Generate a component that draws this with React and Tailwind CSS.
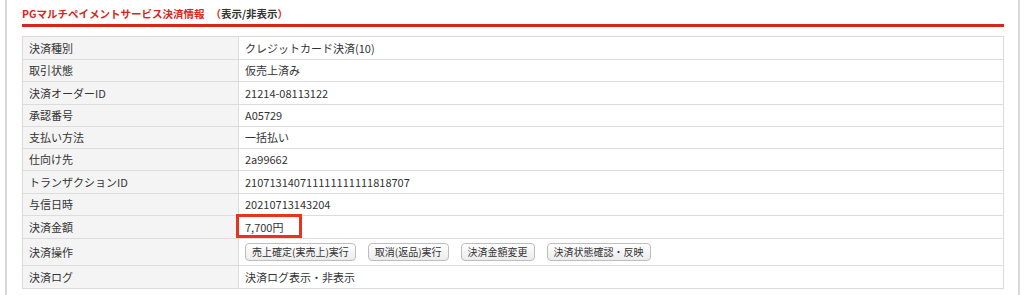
import React from 'react';

const rows = [
    ['決済種別', 'クレジットカード決済(10)', 'h-[23px]'],
    ['取引状態', '仮売上済み', 'h-[22px]'],
    ['決済オーダーID', '21214-08113122', 'h-[23px]'],
    ['承認番号', 'A05729', 'h-[22px]'],
    ['支払い方法', '一括払い', 'h-[22px]'],
    ['仕向け先', '2a99662', 'h-[22px]'],
    ['トランザクションID', '210713140711111111111818707', 'h-[23px]'],
    ['与信日時', '20210713143204', 'h-[22px]'],
];

const actions = ['売上確定(実売上)実行', '取消(返品)実行', '決済金額変更', '決済状態確認・反映'];

function Row({ label, children, h }) {
    return (
        <div className={`flex border-t border-[#dcdcdc] ${h}`}>
            <div className="w-[216px] shrink-0 bg-[#f4f4f4] border-r border-[#dcdcdc] pl-[6px] flex items-center">
                {label}
            </div>
            <div className="flex-1 pl-[6px] flex items-center relative">{children}</div>
        </div>
    );
}

export default function App() {
    return (
        <div className="w-[1024px] h-[295px] bg-white font-['Noto_Sans_CJK_JP',sans-serif] text-[#333] text-[11px]">
            <div className="ml-[5px] w-[1015px] h-full border-l-2 border-r-2 border-[#d9d9d9] pl-[15px] pr-[14px]">
                <div className="pt-[9px] flex items-start h-[24px] text-[10.5px] font-bold leading-none">
                    <span className="text-[#d8261c]">PGマルチペイメントサービス決済情報</span>
                    <span className="ml-[6px] text-[#d8261c]">
                        （<span className="text-[#333]">表示/非表示</span>）
                    </span>
                </div>
                <div className="h-[3px] bg-[#d8261c]" />
                <div className="mt-[9px] border border-t-0 border-[#dcdcdc] shadow-[0_0_1px_#e6e6e6]">
                    {rows.map(([label, value, h]) => (
                        <Row key={label} label={label} h={h}>{value}</Row>
                    ))}
                    <Row label="決済金額" h="h-[23px]">
                        <span>7,700円</span>
                        <div className="absolute left-[-3px] top-[-2px] w-[66px] h-[24px] border-[3px] border-[#e8341c]" />
                    </Row>
                    <Row label="決済操作" h="h-[27px]">
                        <div className="flex gap-[12px]">
                            {actions.map((a) => (
                                <button
                                    key={a}
                                    className="h-[18px] px-[6px] rounded-[4px] border border-[#bdbdbd] bg-gradient-to-b from-white to-[#ececec] text-[10px] leading-none text-[#333]"
                                >
                                    {a}
                                </button>
                            ))}
                        </div>
                    </Row>
                    <Row label="決済ログ" h="h-[23px]">決済ログ表示・非表示</Row>
                </div>
            </div>
        </div>
    );
}
